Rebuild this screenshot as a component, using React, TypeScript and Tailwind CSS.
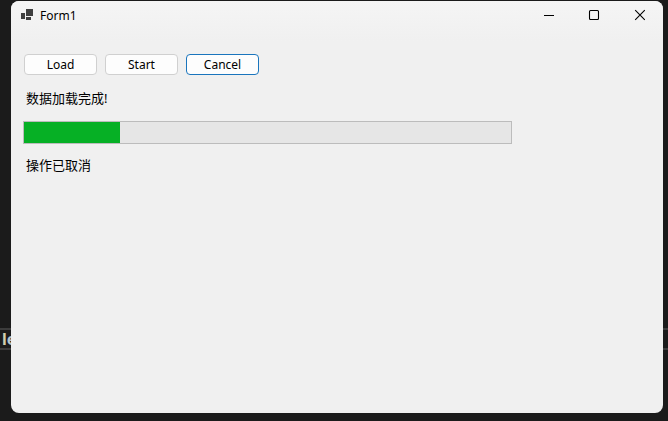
// src/App.tsx

import React, { useState } from 'react';

interface CaptionButtonProps {
  label: string;
  children: React.ReactNode;
}

const CaptionButton: React.FC<CaptionButtonProps> = ({ label, children }) => (
  <button
    type="button"
    aria-label={label}
    className="flex h-7 w-[46px] items-center justify-center hover:bg-black/5"
  >
    <svg
      width="12"
      height="12"
      viewBox="0 0 12 12"
      fill="none"
      stroke="#000000"
      strokeWidth="1.1"
      aria-hidden="true"
    >
      {children}
    </svg>
  </button>
);

const TitleBar: React.FC = () => (
  <header className="flex h-10 items-start bg-linear-to-b from-[#f5f5f5] to-[#f0f0f0] pl-[10px]">
    <div className="flex h-7 flex-1 items-center gap-[7px]">
      <svg width="12" height="12" viewBox="0 0 12 12" fill="#3f3f3f" aria-hidden="true">
        <rect x="5" y="0" width="7" height="7" />
        <rect x="0" y="4" width="4" height="6" />
        <rect x="5" y="8" width="5" height="3" />
      </svg>
      <h1 className="pt-px text-xs">Form1</h1>
    </div>
    <div className="flex">
      <CaptionButton label="Minimize">
        <path d="M2 6.5h10" />
      </CaptionButton>
      <CaptionButton label="Maximize">
        <rect x="1.5" y="1.5" width="9" height="9" rx="1" />
      </CaptionButton>
      <CaptionButton label="Close">
        <path d="M1.2 1.2l9.6 9.6M10.8 1.2l-9.6 9.6" />
      </CaptionButton>
    </div>
  </header>
);

const actions = ['Load', 'Start', 'Cancel'];

const App: React.FC = () => {
  const [active, setActive] = useState('Cancel');

  return (
    <div className="relative flex min-h-screen flex-col bg-[#1b1b1b] pt-px pr-[5px] pb-2 pl-[11px] font-['Noto_Sans','Noto_Sans_CJK_SC',sans-serif] text-black">
      {/* editor line behind the window */}
      <div className="absolute inset-x-0 top-[328px] flex h-[22px] items-center overflow-hidden border-y-2 border-[#3c3c3c] pl-[2px] text-base font-bold text-[#d0cfae]">
        l<span className="text-[#b4c4cc]">e</span>
      </div>

      <main className="relative flex flex-1 flex-col overflow-hidden rounded-lg bg-[#f0f0f0]">
        <TitleBar />

        <div className="flex flex-col px-3 pt-[13px]">
          <div className="flex gap-2 pl-px">
            {actions.map((action) => (
              <button
                key={action}
                type="button"
                onClick={() => setActive(action)}
                className={`flex h-[21px] w-[73px] items-center justify-center rounded border bg-[#fdfdfd] text-xs ${
                  active === action ? 'border-[#1a75bd]' : 'border-[#d0d0d0]'
                }`}
              >
                {action}
              </button>
            ))}
          </div>

          <label htmlFor="progress" className="mt-[13px] pl-[3px] text-[13px] leading-5">
            数据加载完成!
          </label>

          <progress
            id="progress"
            value={96}
            max={487}
            className="mt-[13px] h-[23px] w-full max-w-[489px] appearance-none border border-[#bcbcbc] bg-[#e6e6e6] [&::-webkit-progress-bar]:bg-[#e6e6e6] [&::-webkit-progress-value]:bg-[#06b025]"
          />

          <p className="mt-[11px] pl-[3px] text-[13px] leading-5">操作已取消</p>
        </div>
      </main>
    </div>
  );
};

export default App;
